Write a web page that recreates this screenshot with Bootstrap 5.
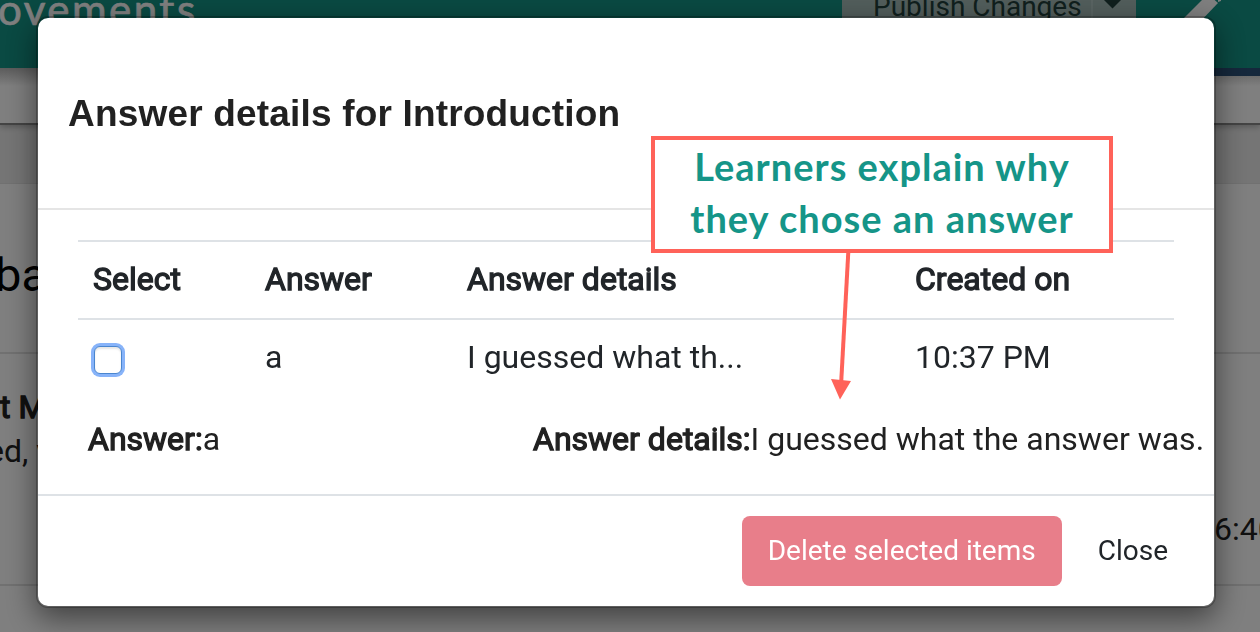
<!DOCTYPE html>
<html lang="en">
<head>
<meta charset="utf-8">
<meta name="viewport" content="width=device-width, initial-scale=1">
<title>Answer details for Introduction</title>
<link href="https://cdn.jsdelivr.net/npm/bootstrap@5.3.0/dist/css/bootstrap.min.css" rel="stylesheet">
<style>
  body { font-family: Roboto, "Liberation Sans", sans-serif; font-size: 32px; line-height: 48px; color: #212121; background: #ebebeb; height: 632px; }
  .faux-bold { font-weight: 400; -webkit-text-stroke: 1.3px currentColor; }

  /* editor page behind the dialog */
  .top-bar { height: 68px; background: #149486; position: relative; z-index: 1; }
  .lesson-name { font-family: Lato, sans-serif; font-size: 42px; line-height: 48px; letter-spacing: 2.5px; color: #fff; margin: -15px 0 0 -2px; height: 48px; -webkit-text-stroke: .7px #fff; }
  .publish-group { width: 294px; height: 40px; margin-right: 42px; background: #a5bcb8; color: #213f3b; font-size: 28px; line-height: 38px; }
  .publish-label { width: 249px; padding: 0 0 0 31px; margin-top: -12px; }
  .publish-caret { border-left: 2px solid #b3c8c5; width: 45px; }
  .tab-strip { height: 57px; background: #fff linear-gradient(#b8b8b8, #fff) top / 100% 18px no-repeat; border-bottom: 2px solid #888; box-shadow: 0 2px 6px rgba(0,0,0,.25); }
  .tab-strip .navy { width: 60px; height: 8px; background: #2b5078; }
  .page-card { margin-top: 58px; background: #fff; height: 449px; border-top: 1px solid #e2e2e2; }
  .card-top { height: 170px; border-bottom: 2px solid #e2e2e2; padding-top: 63px; }
  .card-mid { height: 232px; border-bottom: 2px solid #e2e2e2; padding-top: 31px; }
  .big-piece { font-size: 47px; line-height: 56px; color: #000; margin-left: -5px; }
  .row-piece { line-height: 44px; }
  .time-piece { margin: 32px 0 0 1214px; width: 46px; font-size: 32px; }

  /* dialog */
  .detail-dialog { width: 1180px; max-width: none; margin: 16px 0 0 36px; }
  .detail-dialog .modal-content { height: 592px; border: 2px solid rgba(0,0,0,.25); border-radius: 12px; box-shadow: 0 10px 30px rgba(0,0,0,.5); background-clip: padding-box; color: #212121; }
  .detail-dialog .modal-header { height: 192px; border-bottom: 2px solid #e5e5e5; padding: 2px 30px 0; border-radius: 0; }
  .detail-dialog .modal-title { font-family: "Liberation Sans", sans-serif; font-weight: 700; font-size: 37px; line-height: 48px; letter-spacing: .18px; }
  .detail-dialog .modal-body { padding: 30px 0 0; overflow: hidden; }
  .answer-table { width: 1096px; margin: 0 40px; table-layout: fixed; color: #212529; }
  .answer-table th, .answer-table td { padding: 0 15px; vertical-align: middle; white-space: nowrap; }
  .answer-table th { height: 78px; padding-bottom: 2px; border-top: 2px solid #dee2e6; border-bottom: 2px solid #dee2e6; }
  .answer-table td { height: 76px; padding-bottom: 2px; }
  .pick-box { appearance: none; display: block; width: 28px; height: 28px; margin: 6px 0 0 1px; border: 1px solid #4a86cf; border-radius: 6px; background: #fff; box-shadow: 0 0 0 3px #87b3f9, inset 0 2px 2px rgba(0,0,0,.1); }
  .detail-row { padding: 20px 0 0 50px; white-space: nowrap; }
  .detail-row .answer-col { width: 445px; }
  .detail-dialog .modal-footer { height: 112px; border-top: 2px solid #dee2e6; padding: 0 20px; gap: 10px; }
  .detail-dialog .btn { margin: 0; font-size: 28px; line-height: 42px; height: 70px; padding: 0 26px; border: 0; border-radius: 8px; white-space: nowrap; }
  .btn-remove, .btn-remove:disabled { width: 320px; background: #e87e8a; color: #fff; opacity: 1; }
  .btn-dismiss { color: #212529; }

  /* annotation laid over the dialog */
  .callout-note { position: absolute; left: 651px; top: 136px; width: 462px; height: 117px; z-index: 1060; border: 4px solid #ff6259; background: #fff; color: #159588; font-family: Lato, sans-serif; font-weight: 700; font-size: 38px; line-height: 52px; letter-spacing: 1px; white-space: nowrap; }
  .callout-arrow { position: absolute; left: 820px; top: 250px; z-index: 1060; }
</style>
</head>
<body class="overflow-hidden">
<header class="top-bar d-flex justify-content-between overflow-hidden">
  <div class="lesson-name">ovements</div>
  <div class="d-flex">
    <div class="publish-group d-flex">
      <div class="publish-label">Publish Changes</div>
      <div class="publish-caret"><svg class="d-block" width="43" height="12" viewBox="0 0 43 12"><path d="M8 -3H31L19.5 8.5Z" fill="#213f3b"/></svg></div>
    </div>
    <svg class="d-block" width="82" height="30" viewBox="0 0 82 30"><path d="M-1 25L30 -6L40 3L17 27Z" fill="#fff"/><path d="M40 -1l3 -1v3l-3 1z" fill="#fff"/></svg>
  </div>
</header>
<div class="tab-strip d-flex justify-content-end"><div class="navy"></div></div>
<main class="page-card overflow-hidden">
  <div class="card-top"><div class="big-piece">ba</div></div>
  <div class="card-mid">
    <div class="row-piece faux-bold">t M</div>
    <div class="row-piece" style="margin-left:-13px">ed, v</div>
    <div class="time-piece">6:40</div>
  </div>
</main>

<div class="modal-backdrop show"></div>
<div class="modal d-block overflow-hidden" tabindex="-1" role="dialog" aria-labelledby="detailTitle">
  <div class="modal-dialog detail-dialog">
    <div class="modal-content">
      <div class="modal-header"><h4 class="modal-title" id="detailTitle">Answer details for Introduction</h4></div>
      <div class="modal-body">
        <table class="answer-table">
          <colgroup><col style="width:172px"><col style="width:202px"><col style="width:448px"><col></colgroup>
          <thead><tr><th class="faux-bold">Select</th><th class="faux-bold">Answer</th><th class="faux-bold">Answer details</th><th class="faux-bold">Created on</th></tr></thead>
          <tbody><tr><td><input class="pick-box" type="checkbox" aria-label="Select answer"></td><td>a</td><td>I guessed what th...</td><td>10:37 PM</td></tr></tbody>
        </table>
        <div class="detail-row d-flex">
          <div class="answer-col"><span class="faux-bold">Answer:</span>a</div>
          <div><span class="faux-bold">Answer details:</span>I guessed what the answer was.</div>
        </div>
      </div>
      <div class="modal-footer">
        <button class="btn btn-remove" type="button" disabled>Delete selected items</button>
        <button class="btn btn-dismiss" type="button">Close</button>
      </div>
    </div>
  </div>
</div>
<div class="callout-note text-center">Learners explain why<br>they chose an answer</div>
<svg class="callout-arrow" width="50" height="152" viewBox="820 250 50 152"><path d="M848.3 252L841.2 382" stroke="#ff6259" stroke-width="4"/><path d="M831 379L851 381L840 399.5Z" fill="#ff6259"/></svg>
<script src="https://cdn.jsdelivr.net/npm/bootstrap@5.3.0/dist/js/bootstrap.bundle.min.js"></script>
</body>
</html>
